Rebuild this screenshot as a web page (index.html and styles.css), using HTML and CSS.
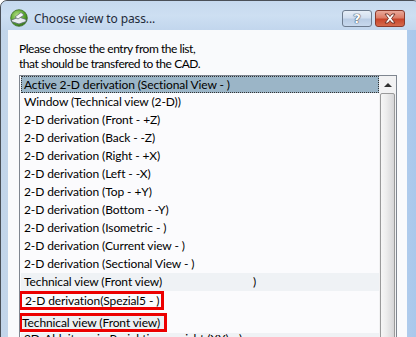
FILE: index.html
```html
<!DOCTYPE html>
<html>
<head>
<meta charset="utf-8">
<link rel="stylesheet" href="styles.css">
</head>
<body>
<div class="window">
  <div class="titlebar">
    <svg class="appicon" width="18" height="18" viewBox="0 0 18 18">
      <defs>
        <radialGradient id="g" cx="40%" cy="35%" r="70%">
          <stop offset="0" stop-color="#b8e08a"/>
          <stop offset="0.6" stop-color="#5aa82e"/>
          <stop offset="1" stop-color="#2f6e17"/>
        </radialGradient>
      </defs>
      <circle cx="9" cy="9" r="8.3" fill="url(#g)" stroke="#3c6b25" stroke-width="0.8"/>
      <path d="M1.5 11 L9 8 L16 10.5 L16 12.5 L9 15 L1.5 12.5 Z" fill="#e8ecef" stroke="#5b6670" stroke-width="0.8"/>
      <path d="M5 8 L11 3.5 L14 6 L8 10 Z" fill="#f4f6f7" stroke="#5b6670" stroke-width="0.7"/>
    </svg>
    <span class="title">Choose view to pass...</span>
    <div class="buttons">
      <div class="btn help">?</div>
      <div class="btn close">
        <svg width="14" height="11" viewBox="0 0 14 11">
          <path d="M2 1 L5 1 L7 3.5 L9 1 L12 1 L8.6 5.5 L12 10 L9 10 L7 7.5 L5 10 L2 10 L5.4 5.5 Z" fill="#ffffff" stroke="#6a2a20" stroke-width="0.9" stroke-linejoin="round"/>
        </svg>
      </div>
    </div>
  </div>
  <div class="client">
    <p class="intro">Please chosse the entry from the list,<br>that should be transfered to the CAD.</p>
    <div class="listbox">
      <div class="rows">
        <div class="row selected">Active 2-D derivation (Sectional View - )</div>
        <div class="row">Window (Technical view (2-D))</div>
        <div class="row">2-D derivation (Front - +Z)</div>
        <div class="row">2-D derivation (Back - -Z)</div>
        <div class="row">2-D derivation (Right - +X)</div>
        <div class="row">2-D derivation (Left - -X)</div>
        <div class="row">2-D derivation (Top - +Y)</div>
        <div class="row">2-D derivation (Bottom - -Y)</div>
        <div class="row">2-D derivation (Isometric - )</div>
        <div class="row">2-D derivation (Current view - )</div>
        <div class="row">2-D derivation (Sectional View - )</div>
        <div class="row faded">Technical view (Front view)<span class="stray">)</span></div>
        <div class="row faded boxed">2-D derivation(Spezial5 - )</div>
        <div class="row faded boxed second">Technical view (Front view)</div>
        <div class="row faded last">2D-Ableitung in Projektionsansicht (XY) - )</div>
      </div>
      <div class="scrollbar">
        <div class="arrow"></div>
        <div class="thumb"></div>
      </div>
    </div>
  </div>
</div>
</body>
</html>
```
FILE: styles.css
```css
html, body {
  margin: 0;
  padding: 0;
  background: #ffffff;
  overflow: hidden;
}
.window {
  width: 420px;
  height: 345px;
  box-sizing: border-box;
  border: 1px solid #4a5058;
  border-radius: 7px 7px 0 0;
  background: linear-gradient(to right, #c2d5ea 0%, #cfdff1 40%, #d3e2f2 80%, #a8c7eb 100%);
  display: flex;
  flex-direction: column;
  overflow: hidden;
  font-family: "Lato", "Noto Sans", sans-serif;
  font-size: 12px;
  color: #000;
}
.titlebar {
  flex-shrink: 0;
  height: 29px;
  box-sizing: border-box;
  display: flex;
  align-items: flex-start;
  padding: 8px 0 0 9px;
  background: linear-gradient(to bottom, #c6d9ee, #cddff2 50%, #c2d6ed);
  border-radius: 6px 6px 0 0;
}
.title {
  margin-left: 6px;
  font-family: "Noto Sans", sans-serif;
  font-size: 12px;
  line-height: 18px;
  color: #1e2a3a;
  letter-spacing: -0.1px;
  margin-top: 1px;
}
.buttons {
  margin-left: auto;
  margin-right: 14px;
  display: flex;
  gap: 3px;
  margin-top: 1px;
}
.btn {
  width: 28px;
  height: 15px;
  border: 1px solid #6d7b8e;
  border-radius: 3px;
  display: flex;
  align-items: center;
  justify-content: center;
}
.help {
  background: linear-gradient(to bottom, #e6eef7 0%, #d2dff0 45%, #b9cce4 55%, #c8d9ee 100%);
  color: #fff;
  font-family: "DejaVu Sans", sans-serif;
  font-weight: bold;
  font-size: 13px;
  text-shadow: 0 0 1px #3c4b60, 0 0 1px #3c4b60, 0 0 1px #3c4b60;
}
.close {
  border-color: #8a3a2c;
  background: linear-gradient(to bottom, #e9a99b 0%, #dd7d68 45%, #c8452b 55%, #d66a4c 100%);
}
.client {
  flex: 1;
  min-height: 0;
  overflow: hidden;
  margin: 0 12px 0 7px;
  background: #f9fafc;
  padding: 11px 0 0 11px;
}
.intro {
  margin: 0;
  line-height: 15px;
  font-size: 12px;
  letter-spacing: -0.45px;
}
.listbox {
  margin-top: 4px;
  width: 378px;
  height: 280px;
  box-sizing: border-box;
  border: 1px solid #7f8690;
  border-bottom: none;
  background: #fbfbfd;
  display: flex;
}
.rows {
  flex: 1;
  padding-left: 1px;
  overflow: hidden;
}
.row {
  height: 18px;
  line-height: 17px;
  padding-left: 3px;
  font-size: 12px;
  letter-spacing: -0.1px;
  white-space: nowrap;
  box-sizing: border-box;
}
.row.selected {
  background: #9bb5c7;
  outline: 1px dotted #333;
  outline-offset: -1px;
  height: 17px;
}
.row.faded {
  background: #eff2f5;
}
.stray {
  margin-left: 91px;
}
.row.boxed {
  width: 145px;
  margin-left: -2px;
  border: 3px solid #ec0000;
  line-height: 13px;
  height: 19px;
  padding-left: 3px;
  background: #fbfbfd;
  overflow: visible;
}
.row.boxed.second {
  width: 148px;
  margin-top: 3px;
  background: #eceff2;
  padding-left: 0;
}
.row.last {
  margin-top: 1px;
  line-height: 12px;
}
.scrollbar {
  width: 17px;
  display: flex;
  flex-direction: column;
  align-items: center;
  background: #f2f2f3;
}
.arrow {
  height: 17px;
  width: 17px;
  position: relative;
}
.arrow::after {
  content: "";
  position: absolute;
  left: 5px;
  top: 7px;
  border-left: 4px solid transparent;
  border-right: 4px solid transparent;
  border-bottom: 4px solid #303030;
}
.thumb {
  flex: 1;
  width: 15px;
  box-sizing: border-box;
  border: 1px solid #9a9a9a;
  border-radius: 2px;
  background: linear-gradient(to right, #f6f6f6 0%, #ededed 40%, #d6d6d8 100%);
}
```
